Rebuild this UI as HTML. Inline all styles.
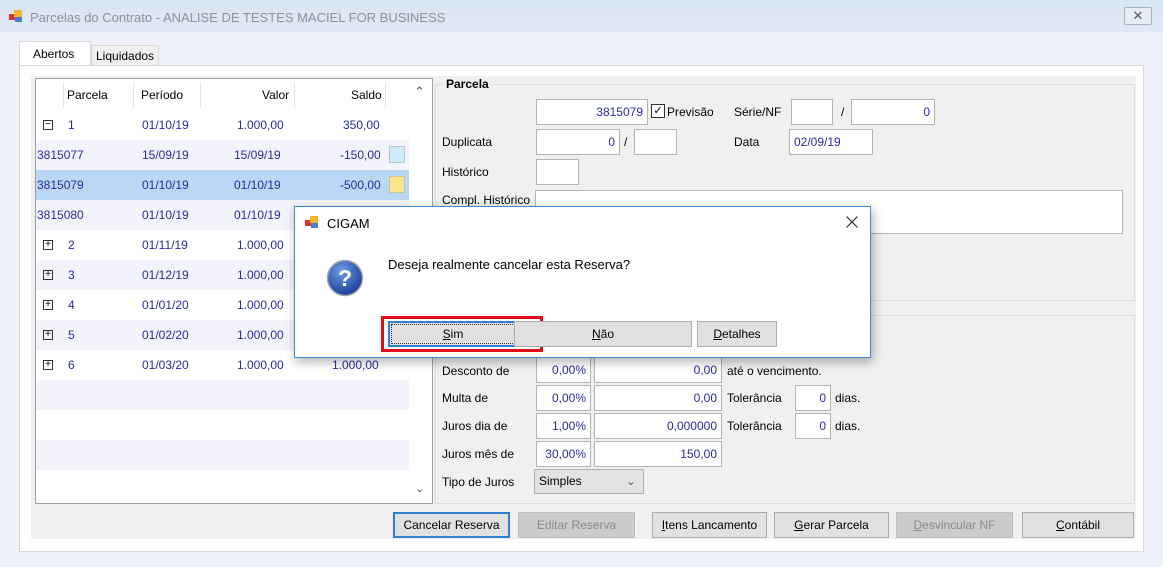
<!DOCTYPE html>
<html><head><meta charset="utf-8"><style>
*{box-sizing:border-box;margin:0;padding:0}
body{width:1163px;height:567px;overflow:hidden;background:#eef1f9;font-family:"Liberation Sans",sans-serif;font-size:12px;color:#000;position:relative}
.a{position:absolute}
.t{position:absolute;white-space:nowrap}
.in{position:absolute;background:#fff;border:1px solid #b4b4b4;color:#2b2b9a;text-align:right;padding-right:4px;line-height:24px;height:26px}
.btn{position:absolute;background:#e1e1e1;border:1px solid #adadad;text-align:center;line-height:24px;height:26px;font-size:12px}
.row{position:absolute;left:36px;width:373px;height:30px}
.row span{position:absolute;top:8px;color:#2b2b9a}
.pm{position:absolute;left:7px;top:10px;width:10px;height:10px;border:1px solid #333;font-size:10px;line-height:8px;text-align:center;color:#000}
</style></head><body>
<div class="a" style="left:0;top:0;width:1163px;height:32px;background:linear-gradient(#d9e5f1,#dfe9f4)"></div>
<svg class="a" style="left:9px;top:10px" width="14" height="12"><rect x="0" y="4" width="6" height="6" fill="#d33"/><rect x="5" y="0" width="8" height="7" fill="#f3b62c"/><rect x="6" y="7" width="7" height="5" fill="#4a7fd0"/></svg>
<div class="t" style="left:30px;top:10px;font-size:13px;color:#8a949e">Parcelas do Contrato - ANALISE DE TESTES MACIEL FOR BUSINESS</div>
<div class="a" style="left:1124px;top:7px;width:28px;height:18px;border:1px solid #a7b3c2;border-radius:2px;background:#e6edf5;text-align:center;font-size:13px;line-height:15px;color:#555">✕</div>
<div class="a" style="left:19px;top:41px;width:72px;height:26px;background:#fff;border:1px solid #d8d8d8;border-bottom:none"></div>
<div class="t" style="left:33px;top:47px">Abertos</div>
<div class="a" style="left:91px;top:45px;width:68px;height:20px;background:#f0f0f0;border:1px solid #d8d8d8;border-bottom:none"></div>
<div class="t" style="left:96px;top:49px">Liquidados</div>
<div class="a" style="left:19px;top:65px;width:1125px;height:487px;background:#fff;border:1px solid #d8d8d8"></div>
<div class="a" style="left:31px;top:76px;width:1105px;height:463px;background:#f0f0f0"></div>
<div class="a" style="left:35px;top:78px;width:398px;height:426px;background:#fff;border:1px solid #a0a0a0"></div>
<div class="a" style="left:63px;top:82px;width:1px;height:26px;background:#e5e5e5"></div>
<div class="a" style="left:133px;top:82px;width:1px;height:26px;background:#e5e5e5"></div>
<div class="a" style="left:200px;top:82px;width:1px;height:26px;background:#e5e5e5"></div>
<div class="a" style="left:294px;top:82px;width:1px;height:26px;background:#e5e5e5"></div>
<div class="a" style="left:385px;top:82px;width:1px;height:26px;background:#e5e5e5"></div>
<div class="t" style="left:67px;top:88px">Parcela</div>
<div class="t" style="left:141px;top:88px">Período</div>
<div class="t" style="left:262px;top:88px">Valor</div>
<div class="t" style="left:351px;top:88px">Saldo</div>
<div class="t" style="left:414px;top:84px;font-size:13px;color:#555">⌃</div>
<div class="t" style="left:415px;top:482px;font-size:11px;color:#555">⌄</div>
<div class="row" style="top:110px"><div class="pm">−</div><span style="left:32px">1</span><span style="left:106px">01/10/19</span><span style="left:201px">1.000,00</span><span style="left:307px">350,00</span></div>
<div class="row" style="top:140px;background:#f3f4fb"><span style="left:1px">3815077</span><span style="left:106px">15/09/19</span><span style="left:198px">15/09/19</span><span style="left:304px">-150,00</span><div class="a" style="left:353px;top:6px;width:16px;height:17px;background:#cfeafb;border:1px solid #b8c8d4"></div></div>
<div class="row" style="top:170px;background:#bad8f6"><span style="left:1px">3815079</span><span style="left:106px">01/10/19</span><span style="left:198px">01/10/19</span><span style="left:304px">-500,00</span><div class="a" style="left:353px;top:6px;width:16px;height:17px;background:#fbe58c;border:1px solid #c8c29a"></div></div>
<div class="row" style="top:200px;background:#f3f4fb"><span style="left:1px">3815080</span><span style="left:106px">01/10/19</span><span style="left:198px">01/10/19</span></div>
<div class="row" style="top:230px"><div class="pm">+</div><span style="left:32px">2</span><span style="left:106px">01/11/19</span><span style="left:201px">1.000,00</span></div>
<div class="row" style="top:260px;background:#f3f4fb"><div class="pm">+</div><span style="left:32px">3</span><span style="left:106px">01/12/19</span><span style="left:201px">1.000,00</span></div>
<div class="row" style="top:290px"><div class="pm">+</div><span style="left:32px">4</span><span style="left:106px">01/01/20</span><span style="left:201px">1.000,00</span></div>
<div class="row" style="top:320px;background:#f3f4fb"><div class="pm">+</div><span style="left:32px">5</span><span style="left:106px">01/02/20</span><span style="left:201px">1.000,00</span></div>
<div class="row" style="top:350px"><div class="pm">+</div><span style="left:32px">6</span><span style="left:106px">01/03/20</span><span style="left:201px">1.000,00</span><span style="left:296px">1.000,00</span></div>
<div class="row" style="top:380px;background:#f3f4fb"></div>
<div class="row" style="top:440px;background:#f3f4fb"></div>
<div class="a" style="left:435px;top:84px;width:700px;height:217px;border:1px solid #dcdcdc"></div>
<div class="t" style="left:443px;top:77px;font-weight:bold;background:#f0f0f0;padding:0 3px">Parcela</div>
<div class="in" style="left:536px;top:99px;width:112px">3815079</div>
<div class="a" style="left:651px;top:104px;width:14px;height:14px;border:1px solid #333;background:#fff;font-size:11px;line-height:12px;text-align:center">✓</div>
<div class="t" style="left:667px;top:105px">Previsão</div>
<div class="t" style="left:734px;top:105px">Série/NF</div>
<div class="in" style="left:791px;top:99px;width:42px"></div>
<div class="t" style="left:841px;top:105px">/</div>
<div class="in" style="left:851px;top:99px;width:84px">0</div>
<div class="t" style="left:442px;top:135px">Duplicata</div>
<div class="in" style="left:536px;top:129px;width:84px">0</div>
<div class="t" style="left:624px;top:135px">/</div>
<div class="in" style="left:634px;top:129px;width:43px"></div>
<div class="t" style="left:734px;top:135px">Data</div>
<div class="in" style="left:789px;top:129px;width:84px;text-align:left;padding-left:4px">02/09/19</div>
<div class="t" style="left:442px;top:165px">Histórico</div>
<div class="in" style="left:536px;top:159px;width:43px"></div>
<div class="t" style="left:442px;top:193px">Compl. Histórico</div>
<div class="in" style="left:535px;top:190px;width:588px;height:44px"></div>
<div class="a" style="left:435px;top:315px;width:700px;height:189px;border:1px solid #dcdcdc"></div>
<div class="t" style="left:442px;top:364px">Desconto de</div>
<div class="in" style="left:536px;top:357px;width:55px">0,00%</div>
<div class="in" style="left:594px;top:357px;width:128px">0,00</div>
<div class="t" style="left:727px;top:364px">até o vencimento.</div>
<div class="t" style="left:442px;top:391px">Multa de</div>
<div class="in" style="left:536px;top:385px;width:55px">0,00%</div>
<div class="in" style="left:594px;top:385px;width:128px">0,00</div>
<div class="t" style="left:727px;top:391px">Tolerância</div>
<div class="in" style="left:795px;top:385px;width:36px">0</div>
<div class="t" style="left:835px;top:391px">dias.</div>
<div class="t" style="left:442px;top:419px">Juros dia de</div>
<div class="in" style="left:536px;top:413px;width:55px">1,00%</div>
<div class="in" style="left:594px;top:413px;width:128px">0,000000</div>
<div class="t" style="left:727px;top:419px">Tolerância</div>
<div class="in" style="left:795px;top:413px;width:36px">0</div>
<div class="t" style="left:835px;top:419px">dias.</div>
<div class="t" style="left:442px;top:447px">Juros mês de</div>
<div class="in" style="left:536px;top:441px;width:55px">30,00%</div>
<div class="in" style="left:594px;top:441px;width:128px">150,00</div>
<div class="t" style="left:442px;top:475px">Tipo de Juros</div>
<div class="a" style="left:534px;top:469px;width:110px;height:25px;background:#e3e3e3;border:1px solid #b0b0b0;line-height:23px;padding-left:4px">Simples<span style="position:absolute;right:7px;color:#666">⌄</span></div>
<div class="btn" style="left:393px;top:512px;width:117px;border:2px solid #2f7fd0;line-height:22px">Cancelar Reserva</div>
<div class="btn" style="left:518px;top:512px;width:117px;background:#ccc;border-color:#bfbfbf;color:#8a8a8a">Editar Reserva</div>
<div class="btn" style="left:652px;top:512px;width:115px"><u>I</u>tens Lancamento</div>
<div class="btn" style="left:774px;top:512px;width:115px"><u>G</u>erar Parcela</div>
<div class="btn" style="left:896px;top:512px;width:117px;background:#ccc;border-color:#bfbfbf;color:#8a8a8a"><u>D</u>esvincular NF</div>
<div class="btn" style="left:1022px;top:512px;width:112px"><u>C</u>ontábil</div>
<div class="a" style="left:294px;top:206px;width:577px;height:152px;background:#fff;border:1px solid #3c8ad0;box-shadow:2px 4px 10px rgba(0,0,0,.3)"></div>
<svg class="a" style="left:305px;top:216px" width="14" height="12"><rect x="0" y="4" width="6" height="6" fill="#d33"/><rect x="5" y="0" width="8" height="7" fill="#f3b62c"/><rect x="6" y="7" width="7" height="5" fill="#4a7fd0"/></svg>
<div class="t" style="left:327px;top:216px;font-size:13px">CIGAM</div>
<svg class="a" style="left:846px;top:216px" width="12" height="12"><path d="M0.5 0.5L11.5 11.5M11.5 0.5L0.5 11.5" stroke="#222" stroke-width="1.1"/></svg>
<svg class="a" style="left:326px;top:259px" width="38" height="38"><defs><radialGradient id="g" cx="40%" cy="30%" r="70%"><stop offset="0" stop-color="#6d9be6"/><stop offset="1" stop-color="#1d3f9a"/></radialGradient></defs><circle cx="19" cy="19" r="17.5" fill="url(#g)" stroke="#9aa" stroke-width="1.5"/><text x="19" y="27" font-size="23" font-weight="bold" fill="#fff" text-anchor="middle" font-family="Liberation Sans">?</text></svg>
<div class="t" style="left:388px;top:257px;font-size:13px">Deseja realmente cancelar esta Reserva?</div>
<div class="a" style="left:381px;top:316px;width:162px;height:36px;border:3px solid #e0101a"></div>
<div class="btn" style="left:388px;top:321px;width:130px;border:2px solid #2f7fd0;line-height:22px;outline:1px dotted #333;outline-offset:-4px"><u>S</u>im</div>
<div class="btn" style="left:514px;top:321px;width:178px"><u>N</u>ão</div>
<div class="btn" style="left:697px;top:321px;width:80px"><u>D</u>etalhes</div>
</body></html>
